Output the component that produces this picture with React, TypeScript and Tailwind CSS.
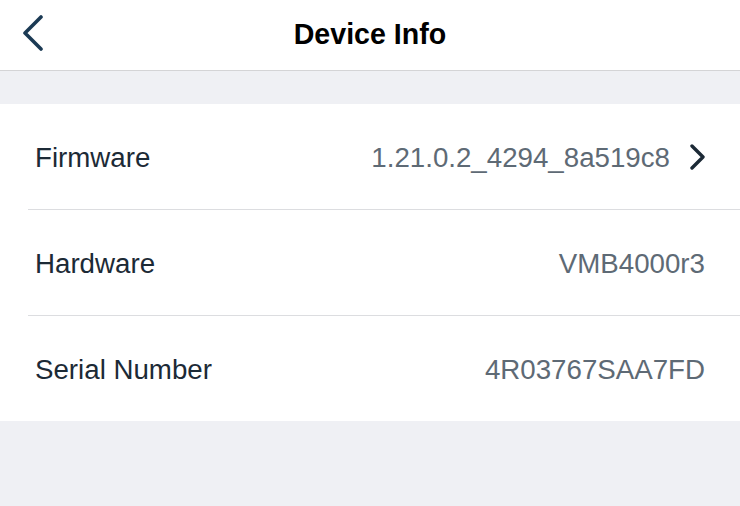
const rows = [
  { label: "Firmware", value: "1.21.0.2_4294_8a519c8", link: true },
  { label: "Hardware", value: "VMB4000r3", link: false },
  { label: "Serial Number", value: "4R03767SAA7FD", link: false },
];

export default function App() {
  return (
    <div className="h-[506px] w-[740px] bg-[#eff0f4] font-['Liberation_Sans',Arial,sans-serif] overflow-hidden">
      <div className="relative flex h-[71px] items-center justify-center border-b border-[#d4d4d6] bg-white">
        <svg className="absolute left-[20px] top-[15px]" width="26" height="36" viewBox="0 0 26 36" fill="none">
          <path d="M21 2 L5 18 L21 34" stroke="#1b3a54" strokeWidth="3.6" strokeLinecap="round" strokeLinejoin="round" />
        </svg>
        <div className="text-[28.6px] font-bold text-black -mt-[2px]">Device Info</div>
      </div>
      <div className="mt-[33px] bg-white">
        {rows.map((r, i) => (
          <div key={r.label} className="flex flex-col">
            <div className="flex h-[105px] items-center justify-between pl-[35px] pr-[35px] pt-[3px]">
              <span className="text-[27.7px] text-[#1c2a36]">{r.label}</span>
              <div className="flex items-center gap-[18px]">
                <span className="text-[27.7px] text-[#5e6a75]">{r.value}</span>
                {r.link && (
                  <svg width="18" height="26" viewBox="0 0 18 26" fill="none" className="-mr-[1px] -mt-[2px]">
                    <path d="M4 2 L15 13 L4 24" stroke="#1c2a36" strokeWidth="3.4" strokeLinecap="round" strokeLinejoin="round" />
                  </svg>
                )}
              </div>
            </div>
            {i < rows.length - 1 && <div className="ml-[28px] h-px bg-[#dcdde0]" />}
          </div>
        ))}
      </div>
    </div>
  );
}
